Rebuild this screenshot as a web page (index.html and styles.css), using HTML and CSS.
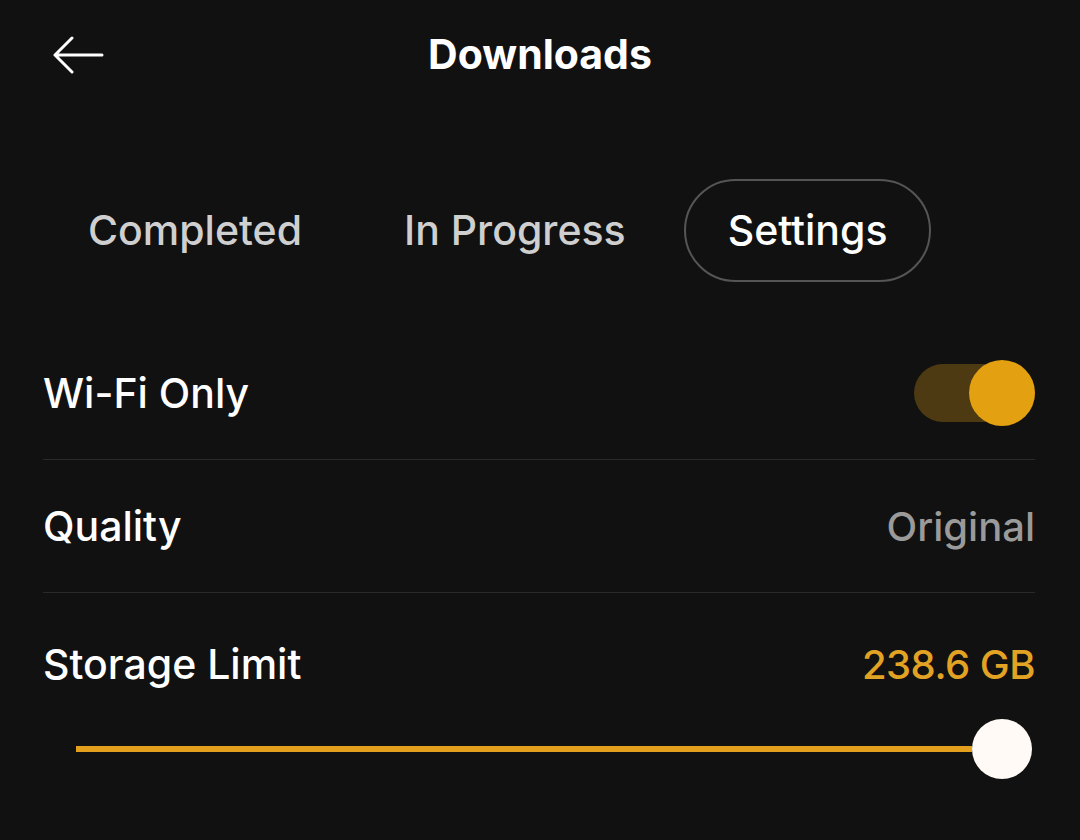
FILE: index.html
```html
<!doctype html>
<html>
<head>
  <meta charset="utf-8">
  <title>Downloads</title>
  <link rel="stylesheet" href="styles.css">
</head>
<body>
  <div id="screen">
    <div class="topbar">
      <span class="back">
        <svg width="52" height="38" viewBox="0 0 52 38">
          <path d="M50 19H3M20 2L3 19l17 17" fill="none" stroke="#fff" stroke-width="3" stroke-linecap="round" stroke-linejoin="round"/>
        </svg>
      </span>
      <h1>Downloads</h1>
    </div>

    <div class="tabs">
      <span class="tab">Completed</span>
      <span class="tab">In Progress</span>
      <span class="tab active">Settings</span>
    </div>

    <div class="settings">
      <div class="row">
        <span class="label">Wi-Fi Only</span>
        <span class="toggle"><span class="knob"></span></span>
      </div>
      <div class="row">
        <span class="label">Quality</span>
        <span class="value">Original</span>
      </div>
      <div class="row storage">
        <div class="storage-head">
          <span class="label">Storage Limit</span>
          <span class="value accent">238.6 GB</span>
        </div>
        <div class="slider">
          <span class="track"></span>
          <span class="thumb"></span>
        </div>
      </div>
    </div>
  </div>
</body>
</html>
```

FILE: styles.css
```css
html {
  background-color: #111;
  color: #fff;
  font-family: Inter, "Noto Sans", sans-serif;
}

body {
  margin: 0;
}

#screen {
  width: 1080px;
  height: 840px;
  overflow: hidden;
}

.topbar {
  height: 108px;
  display: flex;
  align-items: center;
  position: relative;
  padding-left: 52px;
}

.back {
  display: flex;
  width: 52px;
  height: 38px;
  margin-top: 2px;
}

.topbar h1 {
  position: absolute;
  left: 0;
  right: 0;
  top: 0;
  height: 108px;
  line-height: 108px;
  margin: 0;
  text-align: center;
  font-size: 41px;
  font-weight: 700;
  pointer-events: none;
}

.tabs {
  display: flex;
  align-items: center;
  margin-top: 71px;
  padding-left: 44px;
  gap: 14px;
}

.tab {
  height: 99px;
  line-height: 99px;
  padding: 0 42px;
  border: 2px solid transparent;
  border-radius: 52px;
  font-size: 41px;
  font-weight: 500;
  color: #cfcfcf;
}

.tab.active {
  color: #fff;
  border-color: #555;
}

.settings {
  margin-top: 45px;
  padding: 0 45px 0 43px;
}

.row {
  height: 132px;
  display: flex;
  align-items: center;
  justify-content: space-between;
  border-bottom: 1px solid #2a2a2a;
}

.label {
  font-size: 41px;
  font-weight: 500;
}

.value {
  font-size: 40px;
  font-weight: 500;
  color: #9a9a9a;
}

.value.accent {
  color: #e2a224;
  letter-spacing: -0.5px;
}

.toggle {
  width: 121px;
  height: 58px;
  border-radius: 29px;
  background: #4d3a12;
  display: flex;
  align-items: center;
  justify-content: flex-end;
}

.knob {
  width: 66px;
  height: 66px;
  border-radius: 50%;
  background: #e3a010;
}

.row.storage {
  display: block;
  height: auto;
  border-bottom: none;
}

.storage-head {
  display: flex;
  justify-content: space-between;
  align-items: center;
  height: 142px;
}

.slider {
  display: flex;
  align-items: center;
  margin-left: 33px;
  margin-right: 3px;
  height: 60px;
  margin-top: -16px;
}

.track {
  flex: 1;
  height: 6px;
  background: #e2a01c;
}

.thumb {
  width: 60px;
  height: 60px;
  border-radius: 50%;
  background: #fffaf5;
}
```
